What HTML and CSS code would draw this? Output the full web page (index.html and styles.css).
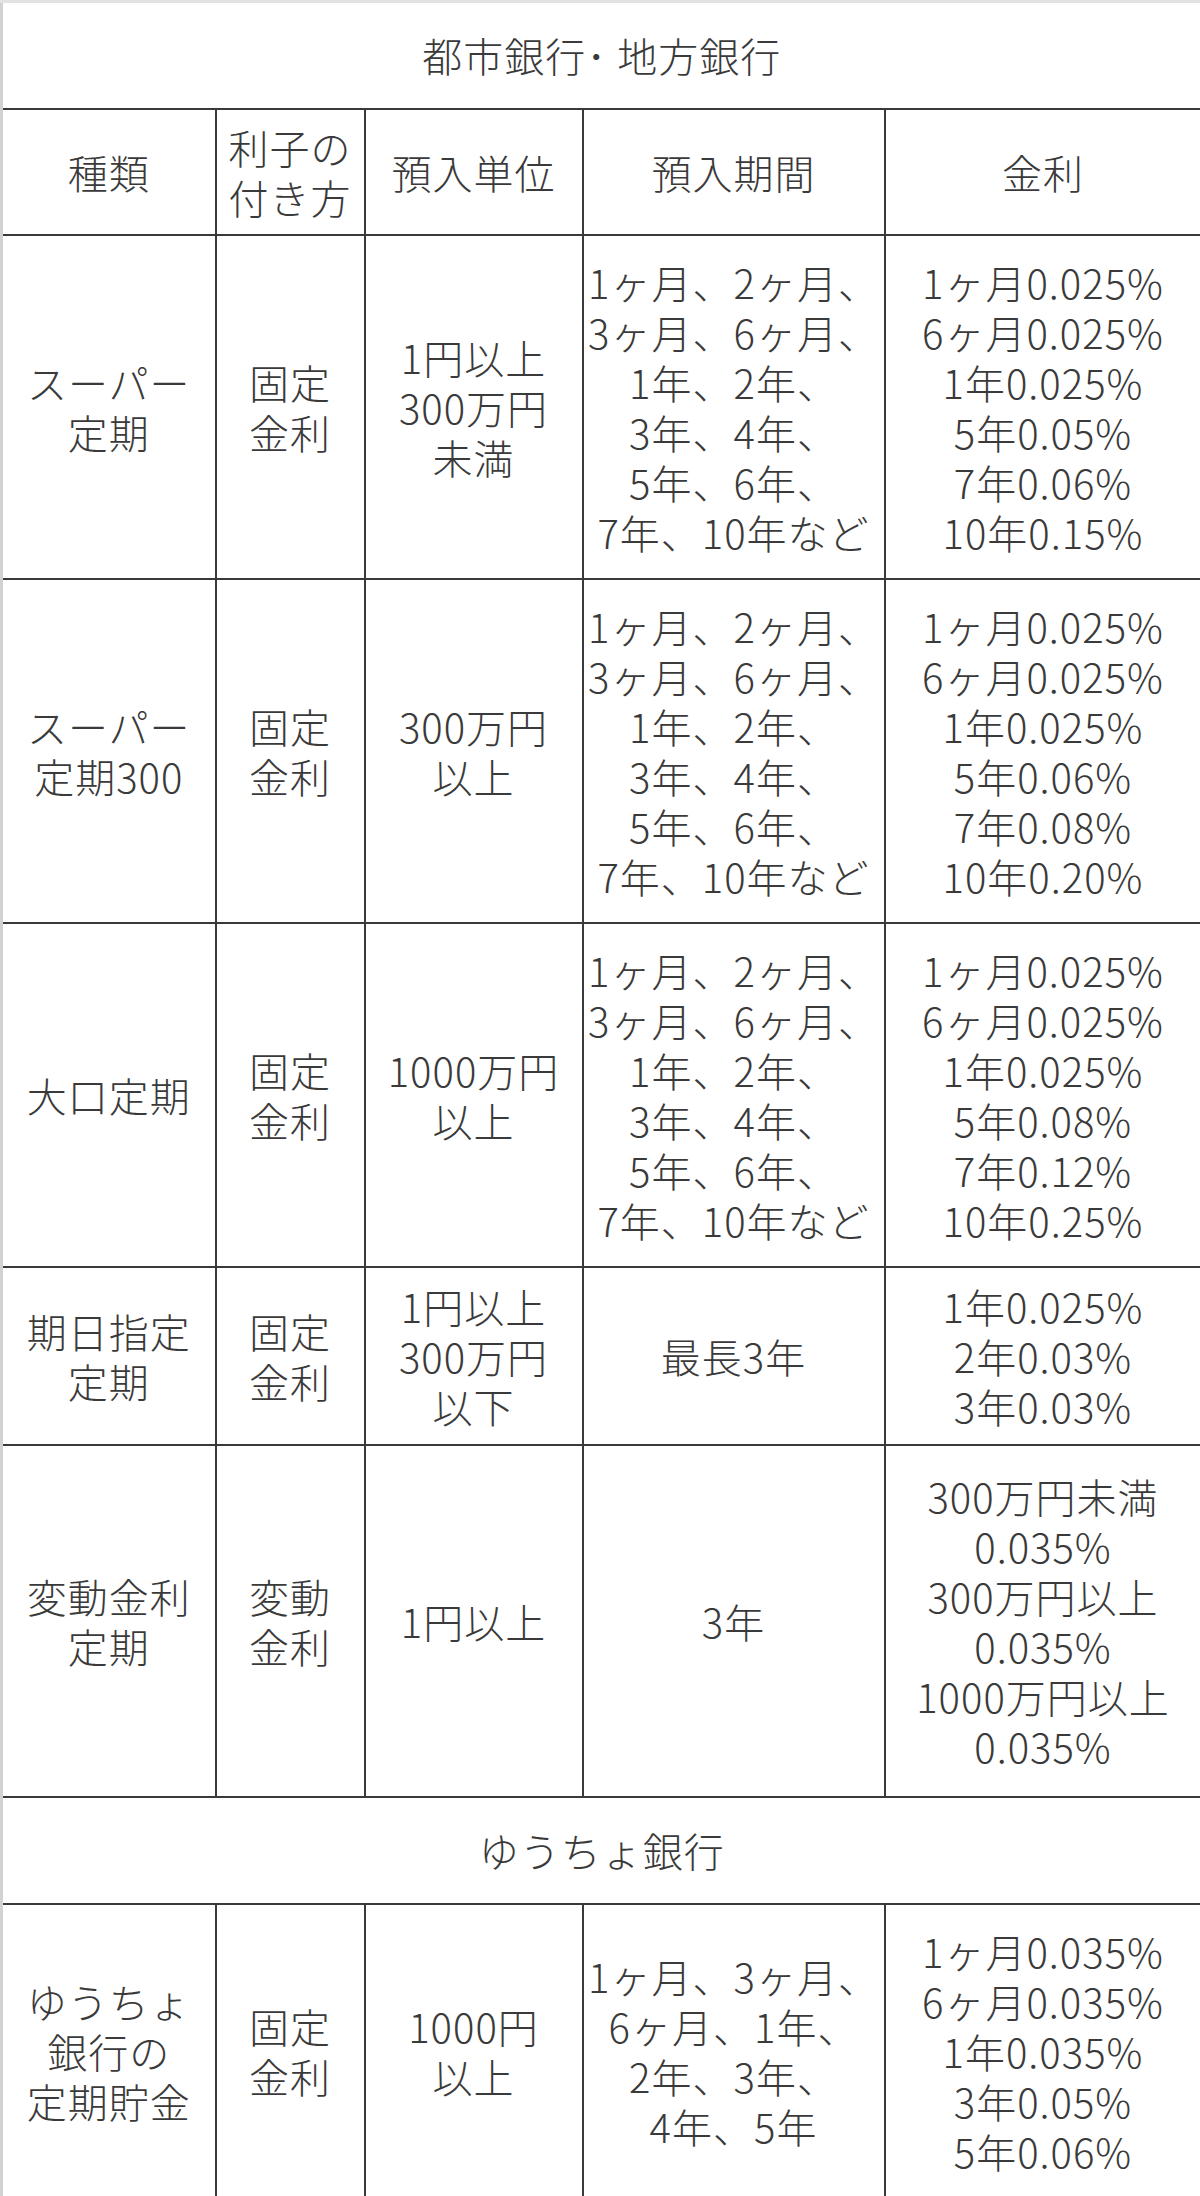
FILE: index.html
```html
<!DOCTYPE html>
<html lang="ja">
<head>
<meta charset="utf-8">
<title>定期預金 金利一覧</title>
<link rel="stylesheet" href="styles.css">
</head>
<body>
<table class="rates">
  <colgroup>
    <col class="c-kind">
    <col class="c-type">
    <col class="c-unit">
    <col class="c-term">
    <col class="c-rate">
  </colgroup>
  <tr class="r-title first">
    <td colspan="5">都市銀行･ 地方銀行</td>
  </tr>
  <tr class="r-head">
    <td>種類</td>
    <td>利子の<br>付き方</td>
    <td>預入単位</td>
    <td>預入期間</td>
    <td>金利</td>
  </tr>
  <tr class="r-six">
    <td>スーパー<br>定期</td>
    <td>固定<br>金利</td>
    <td>1円以上<br>300万円<br>未満</td>
    <td>1ヶ月、2ヶ月、<br>3ヶ月、6ヶ月、<br>1年、2年、<br>3年、4年、<br>5年、6年、<br>7年、10年など</td>
    <td>1ヶ月0.025%<br>6ヶ月0.025%<br>1年0.025%<br>5年0.05%<br>7年0.06%<br>10年0.15%</td>
  </tr>
  <tr class="r-six">
    <td>スーパー<br>定期300</td>
    <td>固定<br>金利</td>
    <td>300万円<br>以上</td>
    <td>1ヶ月、2ヶ月、<br>3ヶ月、6ヶ月、<br>1年、2年、<br>3年、4年、<br>5年、6年、<br>7年、10年など</td>
    <td>1ヶ月0.025%<br>6ヶ月0.025%<br>1年0.025%<br>5年0.06%<br>7年0.08%<br>10年0.20%</td>
  </tr>
  <tr class="r-six">
    <td>大口定期</td>
    <td>固定<br>金利</td>
    <td>1000万円<br>以上</td>
    <td>1ヶ月、2ヶ月、<br>3ヶ月、6ヶ月、<br>1年、2年、<br>3年、4年、<br>5年、6年、<br>7年、10年など</td>
    <td>1ヶ月0.025%<br>6ヶ月0.025%<br>1年0.025%<br>5年0.08%<br>7年0.12%<br>10年0.25%</td>
  </tr>
  <tr class="r-three">
    <td>期日指定<br>定期</td>
    <td>固定<br>金利</td>
    <td>1円以上<br>300万円<br>以下</td>
    <td>最長3年</td>
    <td>1年0.025%<br>2年0.03%<br>3年0.03%</td>
  </tr>
  <tr class="r-var">
    <td>変動金利<br>定期</td>
    <td>変動<br>金利</td>
    <td>1円以上</td>
    <td>3年</td>
    <td>300万円未満<br>0.035%<br>300万円以上<br>0.035%<br>1000万円以上<br>0.035%</td>
  </tr>
  <tr class="r-title">
    <td colspan="5">ゆうちょ銀行</td>
  </tr>
  <tr class="r-post">
    <td>ゆうちょ<br>銀行の<br>定期貯金</td>
    <td>固定<br>金利</td>
    <td>1000円<br>以上</td>
    <td>1ヶ月、3ヶ月、<br>6ヶ月、1年、<br>2年、3年、<br>4年、5年</td>
    <td>1ヶ月0.035%<br>6ヶ月0.035%<br>1年0.035%<br>3年0.05%<br>5年0.06%</td>
  </tr>
</table>
</body>
</html>
```

FILE: styles.css
```css
html, body {
  margin: 0;
  padding: 0;
  background: #ffffff;
}

.rates {
  width: 1200px;
  table-layout: fixed;
  border-collapse: collapse;
  font-family: "Noto Sans CJK JP", "Noto Sans", sans-serif;
  font-weight: 300;
  font-size: 40px;
  line-height: 50px;
  letter-spacing: 1px;
  color: #3a3a3a;
}

.c-kind { width: 214px; }
.c-type { width: 149px; }
.c-unit { width: 218px; }
.c-term { width: 302px; }
.c-rate { width: 317px; }

.rates td {
  border: 2px solid #3a3a3a;
  padding: 0;
  text-align: center;
  vertical-align: middle;
  white-space: nowrap;
}

.rates td:first-child {
  border-left: 3px solid #d2d2d2;
}

.rates tr.first td {
  border-top: 3px solid #e2e2e2;
}

.r-title { height: 107px; }
.r-head { height: 126px; }
.r-six { height: 344px; }
.r-three { height: 178px; }
.r-var { height: 352px; }
.r-post { height: 294px; }
```
